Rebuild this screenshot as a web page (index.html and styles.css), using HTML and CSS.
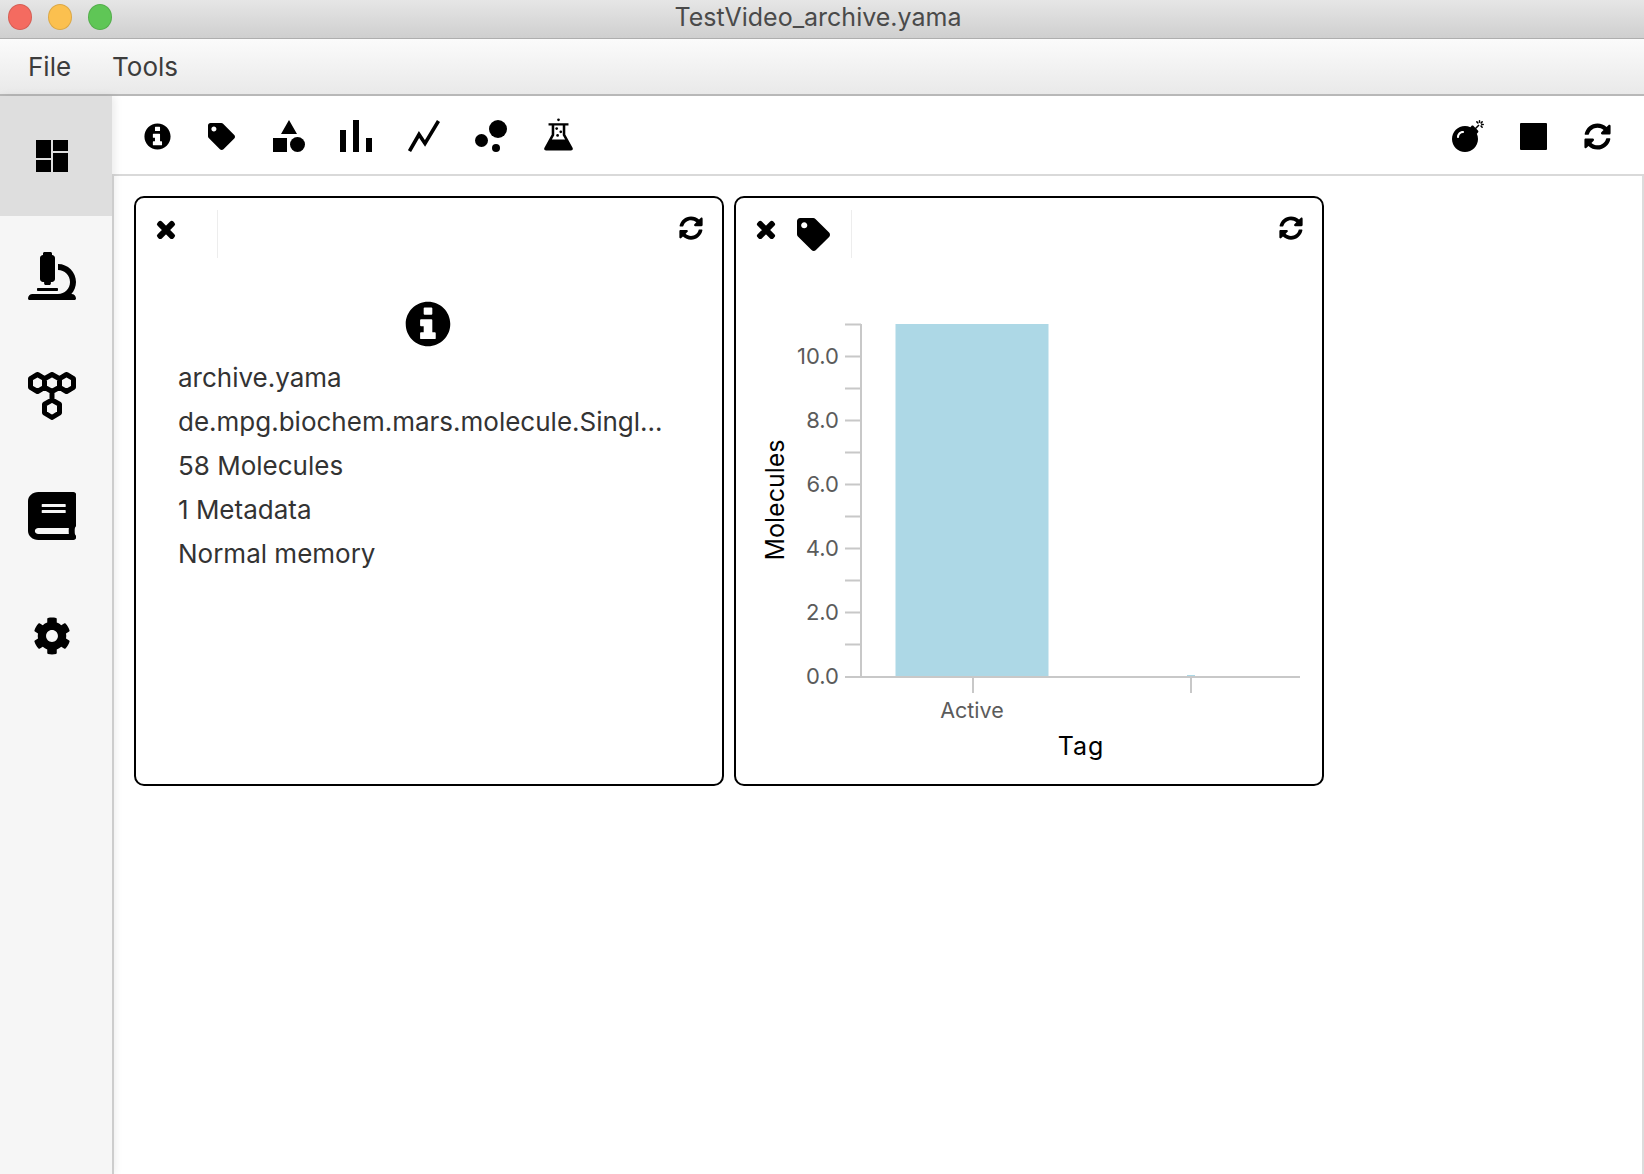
FILE: index.html
```html
<!DOCTYPE html>
<html>
<head>
  <title>TestVideo_archive.yama</title>
  <meta charset="UTF-8" />
  <link rel="stylesheet" href="styles.css">
</head>
<body>
  <svg class="sprite" aria-hidden="true">
    <symbol id="i-info" viewBox="0 0 512 512"><path fill-rule="evenodd" d="M256 8C119.043 8 8 119.083 8 256c0 137 111.043 248 248 248s248-111 248-248C504 119.083 392.957 8 256 8zM218 72h76c6 0 10 4 10 10v60c0 6-4 10-10 10h-76c-6 0-10-4-10-10V82c0-6 4-10 10-10zM178 204h116c6 0 10 4 10 10v134h28c6 0 10 4 10 10v56c0 6-4 10-10 10H178c-6 0-10-4-10-10v-56c0-6 4-10 10-10h30v-68h-30c-6 0-10-4-10-10v-56c0-6 4-10 10-10z"/></symbol>
    <symbol id="i-tag" viewBox="0 0 512 512"><path d="M0 252.118V48C0 21.49 21.49 0 48 0h204.118a48 48 0 0 1 33.941 14.059l211.882 211.882c18.745 18.745 18.745 49.137 0 67.882L293.823 497.941c-18.745 18.745-49.137 18.745-67.882 0L14.059 286.059A48 48 0 0 1 0 252.118zM112 64c-26.51 0-48 21.49-48 48s21.49 48 48 48 48-21.49 48-48-21.49-48-48-48z"/></symbol>
    <symbol id="i-times" viewBox="0 0 352 512"><path stroke="#000" stroke-width="34" d="M242.72 256l100.07-100.07c12.28-12.28 12.28-32.19 0-44.48l-22.24-22.24c-12.28-12.28-32.19-12.28-44.48 0L176 189.28 75.93 89.21c-12.28-12.28-32.19-12.28-44.48 0L9.21 111.45c-12.28 12.28-12.28 32.19 0 44.48L109.28 256 9.21 356.07c-12.28 12.28-12.28 32.19 0 44.48l22.24 22.24c12.28 12.28 32.2 12.28 44.48 0L176 322.72l100.07 100.07c12.28 12.28 32.2 12.28 44.48 0l22.24-22.24c12.28-12.28 12.28-32.19 0-44.48L242.72 256z"/></symbol>
    <symbol id="i-sync" viewBox="0 0 512 512"><path d="M370.72 133.28C339.458 104.008 298.888 87.962 255.848 88c-77.458.068-144.328 53.178-162.791 126.85-1.344 5.363-6.122 9.15-11.651 9.15H24.103c-7.498 0-13.194-6.807-11.807-14.176C33.933 94.924 134.813 8 256 8c66.448 0 126.791 26.136 171.315 68.685L463.03 40.97C478.149 25.851 504 36.559 504 57.941V192c0 13.255-10.745 24-24 24H345.941c-21.382 0-32.09-25.851-16.971-40.971l41.75-41.749zM32 296h134.059c21.382 0 32.09 25.851 16.971 40.971l-41.75 41.75c31.262 29.273 71.835 45.319 114.876 45.28 77.418-.07 144.315-53.144 162.787-126.849 1.344-5.363 6.122-9.15 11.651-9.15h57.304c7.498 0 13.194 6.807 11.807 14.176C478.067 417.076 377.187 504 256 504c-66.448 0-126.791-26.136-171.315-68.685L48.97 471.03C33.851 486.149 8 475.441 8 454.059V320c0-13.255 10.745-24 24-24z"/></symbol>
    <symbol id="i-cog" viewBox="0 0 512 512"><path d="M487.4 315.7l-42.6-24.6c4.3-23.2 4.3-47 0-70.2l42.6-24.6c4.9-2.8 7.1-8.6 5.5-14-11.1-35.6-30-67.8-54.7-94.6-3.8-4.1-10-5.1-14.8-2.3L380.8 110c-17.9-15.4-38.5-27.3-60.8-35.1V25.8c0-5.6-3.9-10.5-9.4-11.7-36.7-8.2-74.3-7.8-109.2 0-5.5 1.2-9.4 6.1-9.4 11.7V75c-22.2 7.9-42.8 19.8-60.8 35.1L88.7 85.5c-4.9-2.8-11-1.9-14.8 2.3-24.7 26.7-43.6 58.9-54.7 94.6-1.7 5.4.6 11.2 5.5 14L67.3 221c-4.3 23.2-4.3 47 0 70.2l-42.6 24.6c-4.9 2.8-7.1 8.6-5.5 14 11.1 35.6 30 67.8 54.7 94.6 3.8 4.1 10 5.1 14.8 2.3l42.6-24.6c17.9 15.4 38.5 27.3 60.8 35.1v49.2c0 5.6 3.9 10.5 9.4 11.7 36.7 8.2 74.3 7.8 109.2 0 5.5-1.2 9.4-6.1 9.4-11.7v-49.2c22.2-7.9 42.8-19.8 60.8-35.1l42.6 24.6c4.9 2.8 11 1.9 14.8-2.3 24.7-26.7 43.6-58.9 54.7-94.6 1.5-5.5-.7-11.3-5.6-14.1zM256 336c-44.1 0-80-35.9-80-80s35.9-80 80-80 80 35.9 80 80-35.9 80-80 80z"/></symbol>
    <symbol id="i-book" viewBox="0 0 448 512" preserveAspectRatio="none"><path d="M448 360V24c0-13.3-10.7-24-24-24H96C43 0 0 43 0 96v320c0 53 43 96 96 96h328c13.3 0 24-10.7 24-24v-16c0-7.5-3.5-14.3-8.9-18.7-4.2-15.4-4.2-59.3 0-74.7 5.4-4.3 8.9-11.1 8.9-18.6zM128 134c0-3.3 2.7-6 6-6h212c3.3 0 6 2.7 6 6v20c0 3.3-2.7 6-6 6H134c-3.3 0-6-2.7-6-6v-20zm0 64c0-3.3 2.7-6 6-6h212c3.3 0 6 2.7 6 6v20c0 3.3-2.7 6-6 6H134c-3.3 0-6-2.7-6-6v-20zm253.4 250H96c-17.7 0-32-14.3-32-32 0-17.6 14.4-32 32-32h285.4c-1.9 17.1-1.9 46.9 0 64z"/></symbol>
    <symbol id="i-microscope" viewBox="0 0 512 512"><path d="M160 320h12v16c0 8.84 7.16 16 16 16h40c8.84 0 16-7.16 16-16v-16h12c17.67 0 32-14.33 32-32V64c0-17.67-14.33-32-32-32V16c0-8.84-7.16-16-16-16h-64c-8.84 0-16 7.16-16 16v16c-17.67 0-32 14.33-32 32v224c0 17.67 14.33 32 32 32zm304 128h-1.29C493.24 413.99 512 369.2 512 320c0-105.88-86.12-192-192-192v64c70.58 0 128 57.42 128 128s-57.42 128-128 128H48c-26.51 0-48 21.49-48 48 0 8.84 7.16 16 16 16h480c8.84 0 16-7.16 16-16 0-26.51-21.49-48-48-48zm-360-32h208c4.42 0 8-3.58 8-8v-16c0-4.42-3.58-8-8-8H104c-4.42 0-8 3.58-8 8v16c0 4.42 3.58 8 8 8z"/></symbol>
    <symbol id="i-bomb" viewBox="0 0 512 512"><path d="M440.5 88.5l-52 52L415 167c9.4 9.4 9.4 24.6 0 33.9l-17.4 17.4c11.8 26.1 18.4 55.1 18.4 85.6 0 114.9-93.1 208-208 208S0 418.9 0 304 93.1 96 208 96c30.5 0 59.5 6.6 85.6 18.4L311 97c9.4-9.4 24.6-9.4 33.9 0l26.5 26.5 52-52 17.1 17zM500 60h-24c-6.6 0-12 5.4-12 12s5.4 12 12 12h24c6.6 0 12-5.4 12-12s-5.4-12-12-12zM440 0c-6.6 0-12 5.4-12 12v24c0 6.6 5.4 12 12 12s12-5.4 12-12V12c0-6.6-5.4-12-12-12zm33.9 55l17-17c4.7-4.7 4.7-12.3 0-17-4.7-4.7-12.3-4.7-17 0l-17 17c-4.7 4.7-4.7 12.3 0 17 4.8 4.7 12.4 4.7 17 0zm-67.8 0c4.7 4.7 12.3 4.7 17 0 4.7-4.7 4.7-12.3 0-17l-17-17c-4.7-4.7-12.3-4.7-17 0-4.7 4.7-4.7 12.3 0 17l17 17zm67.8 34c-4.7-4.7-12.3-4.7-17 0-4.7 4.7-4.7 12.3 0 17l17 17c4.7 4.7 12.3 4.7 17 0 4.7-4.7 4.7-12.3 0-17l-17-17zM112 272c0-35.3 28.7-64 64-64 8.8 0 16-7.2 16-16s-7.2-16-16-16c-52.9 0-96 43.1-96 96 0 8.8 7.2 16 16 16s16-7.2 16-16z"/></symbol>
    <symbol id="i-dashboard" viewBox="0 0 32 32"><path d="M0 0h15v18H0zM17 0h15v11H17zM0 20h15v12H0zM17 13h15v19H17z"/></symbol>
    <symbol id="i-shapes" viewBox="0 0 32 32"><path d="M16 0l8 14H8zM0 18h14v14H0z"/><circle cx="24.500" cy="24.500" r="7.500"/></symbol>
    <symbol id="i-bars" viewBox="0 0 32 32"><path d="M0 10h6v22H0zM13 0h6v32h-6zM26 18h6v14h-6z"/></symbol>
    <symbol id="i-line" viewBox="0 0 32 32"><path d="M1.500 31L11 14.500l6 9L30.500 1" fill="none" stroke="#000" stroke-width="3.600"/></symbol>
    <symbol id="i-bubbles" viewBox="0 0 32 32"><circle cx="23" cy="9" r="9"/><circle cx="6.500" cy="20.500" r="6.500"/><circle cx="21" cy="28" r="4"/></symbol>
    <symbol id="i-flask" viewBox="0 0 32 36"><path fill-rule="evenodd" d="M5 5.500h22v2.600h-3.500v10l8 14.500c.8 1.500 0 3-1.800 3H2.300c-1.800 0-2.600-1.500-1.800-3l8-14.500v-10H5zM11.300 8.100v10.700l-2.600 4.700h14.600l-2.600-4.700V8.100z"/><circle cx="16" cy="1.800" r="1.500"/><circle cx="14" cy="11.500" r="1.500"/><circle cx="18.500" cy="15" r="1.500"/><circle cx="15" cy="19" r="1.500"/></symbol>
    <symbol id="i-hex" viewBox="0 0 48 48"><g fill="none" stroke="#000" stroke-width="5" stroke-linejoin="round"><path d="M9.500 2.500l7 4.200v8.600l-7 4.200-7-4.200V6.700zM24 2.500l7.500 4.200v8.600L24 19.500l-7.500-4.200V6.700zM38.500 2.500l7 4.200v8.600l-7 4.200-7-4.200V6.700zM24 28l7.500 4.200v8.600L24 45.500l-7.500-4.700v-8.600zM24 19.500V28"/></g></symbol>
  </svg>

  <div class="titlebar">
    <div class="lights">
      <span class="light red"></span>
      <span class="light yellow"></span>
      <span class="light green"></span>
    </div>
    <div class="title">TestVideo_archive.yama</div>
  </div>

  <div class="menubar">
    <span class="menu-item">File</span>
    <span class="menu-item">Tools</span>
  </div>

  <div class="main">
    <nav class="sidebar">
      <div class="side-item active"><svg class="ic-dash"><use href="#i-dashboard"/></svg></div>
      <div class="side-item"><svg class="ic-48"><use href="#i-microscope"/></svg></div>
      <div class="side-item"><svg class="ic-48"><use href="#i-hex"/></svg></div>
      <div class="side-item"><svg class="ic-48"><use href="#i-book"/></svg></div>
      <div class="side-item"><svg class="ic-cog"><use href="#i-cog"/></svg></div>
    </nav>

    <div class="content">
      <div class="toolbar">
        <div class="tool-group">
          <span class="tool tool-info"><svg class="ic-27"><use href="#i-info"/></svg></span>
          <span class="tool"><svg class="ic-27"><use href="#i-tag"/></svg></span>
          <span class="tool"><svg class="ic-32"><use href="#i-shapes"/></svg></span>
          <span class="tool"><svg class="ic-32"><use href="#i-bars"/></svg></span>
          <span class="tool"><svg class="ic-32"><use href="#i-line"/></svg></span>
          <span class="tool"><svg class="ic-32"><use href="#i-bubbles"/></svg></span>
          <span class="tool"><svg class="ic-flask"><use href="#i-flask"/></svg></span>
        </div>
        <div class="tool-group">
          <span class="tool"><svg class="ic-32"><use href="#i-bomb"/></svg></span>
          <span class="tool tool-stop"><span class="stop"></span></span>
          <span class="tool tool-sync"><svg class="ic-27"><use href="#i-sync"/></svg></span>
        </div>
      </div>

      <div class="cards">
        <div class="card">
          <div class="card-head">
            <div class="card-tools">
              <svg class="ic-close"><use href="#i-times"/></svg>
            </div>
            <svg class="ic-sync"><use href="#i-sync"/></svg>
          </div>
          <div class="info">
            <svg class="info-icon"><use href="#i-info"/></svg>
            <div class="info-row">archive.yama</div>
            <div class="info-row">de.mpg.biochem.mars.molecule.Singl...</div>
            <div class="info-row">58 Molecules</div>
            <div class="info-row">1 Metadata</div>
            <div class="info-row">Normal memory</div>
          </div>
        </div>

        <div class="card">
          <div class="card-head">
            <div class="card-tools wide">
              <svg class="ic-close"><use href="#i-times"/></svg>
              <svg class="ic-tag"><use href="#i-tag"/></svg>
            </div>
            <svg class="ic-sync"><use href="#i-sync"/></svg>
          </div>
          <!-- viewBox is in page coordinates so the ticks read off the screenshot directly -->
          <svg class="chart" viewBox="736 260 586 524">
            <rect class="bar" x="895.500" y="324" width="153" height="352.500"/>
            <path class="axis" d="M861 324V677M845 677H1300M973 677V693M1191 677V693"/>
            <path class="axis" d="M845 324.500H861M845 356.500H861M845 388.500H861M845 420.500H861M845 452.500H861M845 484.500H861M845 516.500H861M845 548.500H861M845 580.500H861M845 612.500H861M845 644.500H861"/>
            <rect class="bar" x="1187" y="675" width="8" height="1"/>
            <text class="tick" x="839" y="364" text-anchor="end">10.0</text>
            <text class="tick" x="839" y="428" text-anchor="end">8.0</text>
            <text class="tick" x="839" y="492" text-anchor="end">6.0</text>
            <text class="tick" x="839" y="556" text-anchor="end">4.0</text>
            <text class="tick" x="839" y="620" text-anchor="end">2.0</text>
            <text class="tick" x="839" y="684" text-anchor="end">0.0</text>
            <text class="tick category" x="972" y="718" text-anchor="middle">Active</text>
            <text class="label tag-label" x="1081" y="755" text-anchor="middle">Tag</text>
            <text class="label" transform="translate(784 500) rotate(-90)" text-anchor="middle">Molecules</text>
          </svg>
        </div>
      </div>
    </div>
  </div>
</body>
</html>
```

FILE: styles.css
```css
body {
  margin: 0;
  height: 1174px;
  overflow: hidden;
  display: flex;
  flex-direction: column;
  font-family: Inter, "Liberation Sans", sans-serif;
  background-color: #fff;
  color: #333;
}
.sprite {
  width: 0;
  height: 0;
  position: absolute;
}
svg {
  display: block;
  fill: #000;
}

/* window chrome */
.titlebar {
  height: 38px;
  flex: none;
  display: flex;
  align-items: center;
  justify-content: center;
  position: relative;
  background: linear-gradient(#e6e6e6, #cfcfcf);
  border-bottom: 1px solid #aeaeae;
}
.lights {
  position: absolute;
  left: 8px;
  top: 4px;
  display: flex;
  gap: 16px;
}
.light {
  width: 22px;
  height: 24px;
  border-radius: 50%;
  border: 1px solid rgba(0, 0, 0, 0.12);
}
.red { background-color: #f46b60; }
.yellow { background-color: #fbc04f; }
.green { background-color: #5fc656; }
.title {
  font-size: 25px;
  color: #4a4a4a;
  margin: 0 8px 5px 0;
}
.menubar {
  height: 55px;
  flex: none;
  display: flex;
  align-items: center;
  gap: 41px;
  padding-left: 28px;
  font-size: 26px;
  color: #3c3c3c;
  background: linear-gradient(#fbfbfb, #e9e9e9);
  border-bottom: 2px solid #b8b8b8;
}

.main {
  flex: 1;
  display: flex;
  min-height: 0;
}
.sidebar {
  width: 112px;
  flex: none;
  background-color: #f6f6f6;
  box-shadow: 3px 0 8px rgba(0, 0, 0, 0.08);
  z-index: 1;
}
.side-item {
  height: 120px;
  padding-right: 8px;
  display: flex;
  align-items: center;
  justify-content: center;
}
.side-item.active {
  background-color: #dedede;
}
.ic-dash { width: 32px; height: 32px; }
.ic-48 { width: 48px; height: 48px; }
.ic-cog { width: 38px; height: 38px; }

.content {
  flex: 1;
  min-width: 0;
  display: flex;
  flex-direction: column;
}
.toolbar {
  height: 76px;
  flex: none;
  display: flex;
  justify-content: space-between;
  padding: 2px 13px 0 12px;
  border-bottom: 2px solid #d9d9d9;
}
.tool-group {
  display: flex;
}
.tool {
  width: 67.500px;
  display: flex;
  align-items: center;
  justify-content: center;
}
.tool-info { margin-right: -4px; }
.tool-stop { margin-left: -2.500px; }
.tool-sync { margin-left: -3.500px; }
.ic-27 { width: 27px; height: 27px; }
.ic-32 { width: 32px; height: 32px; }
.ic-flask { width: 29px; height: 33px; margin-top: -3px; }
.stop {
  width: 27px;
  height: 27px;
  background-color: #000;
  border-radius: 1px;
}

.cards {
  flex: 1;
  position: relative;
  z-index: 2;
  display: flex;
  align-items: flex-start;
  gap: 10px;
  padding: 20px;
  border-left: 2px solid #cdcdcd;
  border-right: 2px solid #dcdcdc;
}
.card {
  width: 586px;
  height: 586px;
  flex: none;
  border: 2px solid #000;
  border-radius: 10px;
}
.card-head {
  height: 50px;
  display: flex;
  justify-content: space-between;
  padding: 12px 19px 0 20px;
}
.card-tools {
  height: 48px;
  width: 62px;
  display: flex;
  align-items: flex-start;
  border-right: 1px solid #ededed;
  gap: 21px;
  box-sizing: border-box;
}
.card-tools.wide { width: 96px; }
.ic-close { width: 20px; height: 24px; margin-top: 8px; flex: none; }
.ic-tag { width: 33px; height: 33px; margin-top: 8px; flex: none; }
.ic-sync { width: 24px; height: 24px; margin-top: 6px; }

/* info card */
.info {
  padding: 41px 44px 0 42px;
  font-size: 26px;
}
.info-icon {
  width: 46px;
  height: 46px;
  margin: 0 auto 9px;
}
.info-row {
  line-height: 44px;
  white-space: nowrap;
}

/* tag chart */
.chart {
  width: 586px;
  height: 524px;
}
.bar { fill: #add8e6; }
.axis {
  fill: none;
  stroke: #c8c8c8;
  stroke-width: 2;
}
.chart text { font-family: Inter, "Liberation Sans", sans-serif; }
.tick {
  font-size: 22px;
  fill: #5b5b5b;
}
.category { font-size: 21.500px; }
.label {
  font-size: 25px;
  fill: #000;
}
.tag-label { letter-spacing: 1px; }
```
